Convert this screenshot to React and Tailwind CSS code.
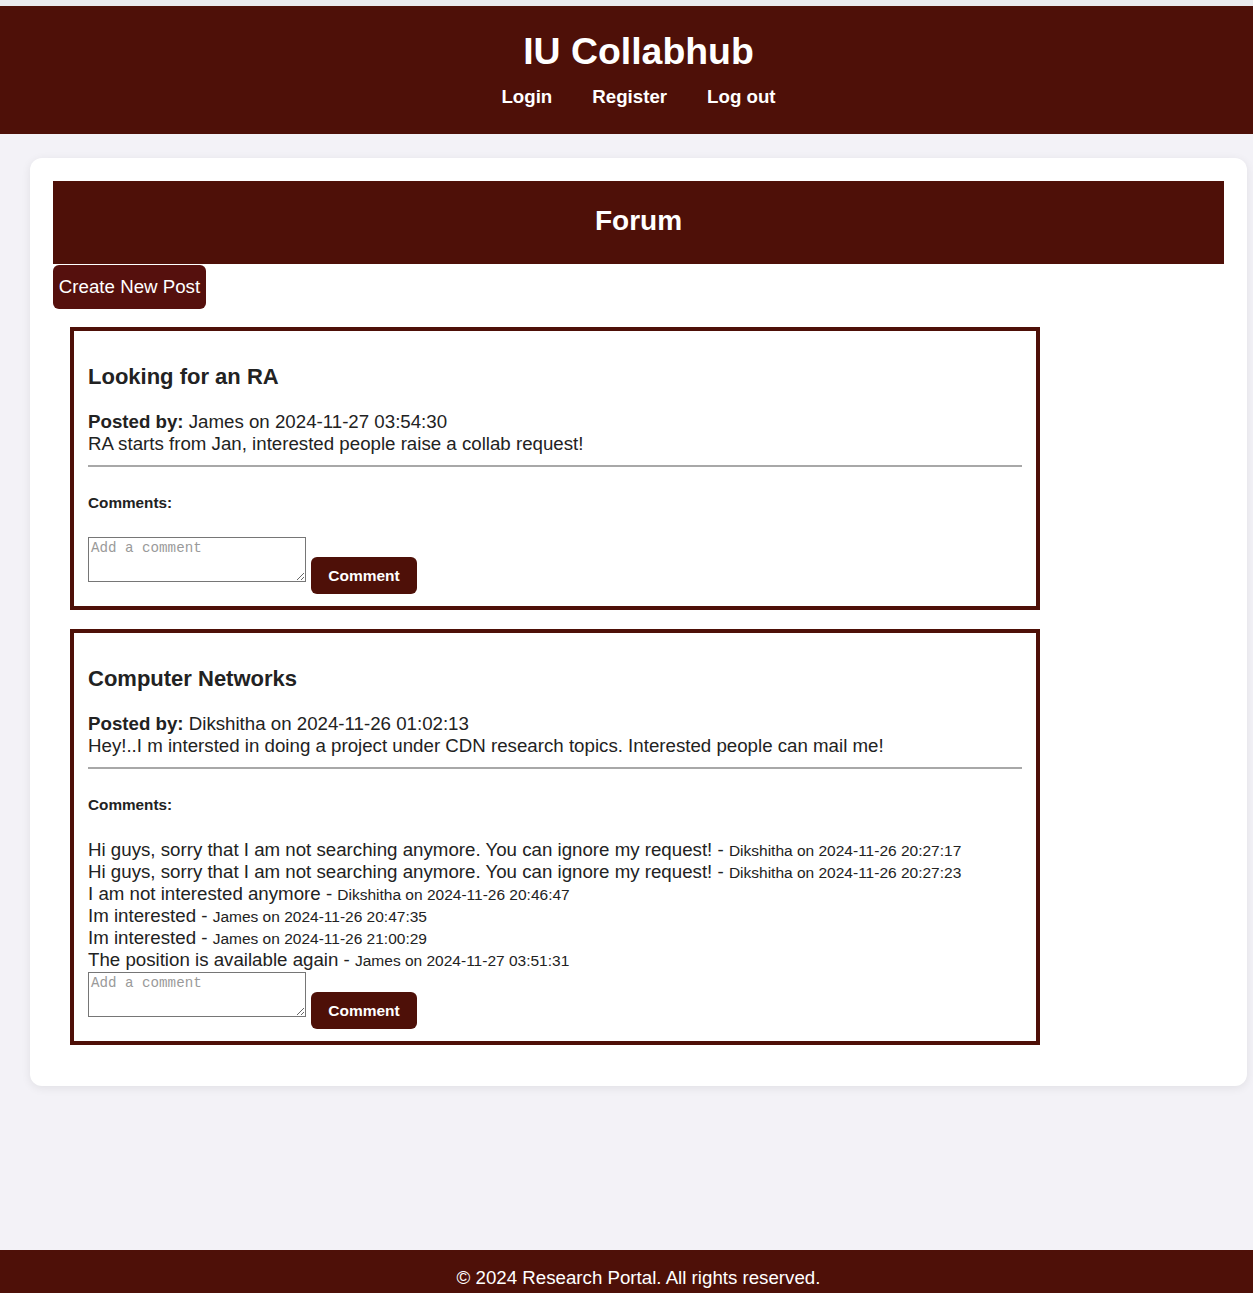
import React from "react";

const posts = [
  {
    title: "Looking for an RA",
    author: "James",
    date: "2024-11-27 03:54:30",
    body: "RA starts from Jan, interested people raise a collab request!",
    comments: [],
  },
  {
    title: "Computer Networks",
    author: "Dikshitha",
    date: "2024-11-26 01:02:13",
    body: "Hey!..I m intersted in doing a project under CDN research topics. Interested people can mail me!",
    comments: [
      ["Hi guys, sorry that I am not searching anymore. You can ignore my request!", "Dikshitha", "2024-11-26 20:27:17"],
      ["Hi guys, sorry that I am not searching anymore. You can ignore my request!", "Dikshitha", "2024-11-26 20:27:23"],
      ["I am not interested anymore", "Dikshitha", "2024-11-26 20:46:47"],
      ["Im interested", "James", "2024-11-26 20:47:35"],
      ["Im interested", "James", "2024-11-26 21:00:29"],
      ["The position is available again", "James", "2024-11-27 03:51:31"],
    ],
  },
];

function Post({ p }) {
  const empty = p.comments.length === 0;
  return (
    <div className="w-[970px] border-4 border-[#4e1008] bg-white px-[14px] pt-[33px] pb-[12px] text-[#222]">
      <h3 className="text-[22px] font-bold leading-[25px]">{p.title}</h3>
      <p className="mt-[22px] text-[18.7px] leading-[22px]">
        <span className="font-bold">Posted by:</span> {p.author} on {p.date}
      </p>
      <p className="text-[18.7px] leading-[22px]">{p.body}</p>
      <div className="mt-[10px] h-[2px] bg-[#a8a8a8]" />
      <h4 className="mt-[27px] text-[15.3px] font-bold leading-[18px]">Comments:</h4>
      <div className="mt-[25px]">
        {p.comments.map((c, i) => (
          <div key={i} className="h-[22px] text-[18.7px] leading-[22px]">
            {c[0]} - <span className="text-[15.5px] leading-[22px]">{c[1]} on {c[2]}</span>
          </div>
        ))}
      </div>
      <div className={empty ? "mt-[2px] flex items-start gap-[5px]" : "mt-px flex items-start gap-[5px]"}>
        <textarea
          placeholder="Add a comment"
          className="h-[45px] w-[218px] border border-[#767676] bg-white p-[2px] font-['Liberation_Mono',monospace] text-[14.2px] leading-[17px] text-[#222] placeholder:text-[#9a9a9a]"
        />
        <button className="mt-[20px] h-[37px] w-[106px] rounded-[6px] bg-[#4e1008] text-[15.5px] font-bold text-white">
          Comment
        </button>
      </div>
    </div>
  );
}

export default function App() {
  return (
    <div className="w-full overflow-hidden font-['Liberation_Sans',Arial,sans-serif]">
      <div className="flex min-h-screen w-[1277px] flex-col bg-[#f3f2f7]">
        <div className="h-[6px] bg-[#eaebee]" />
        <header className="flex flex-col items-center bg-[#4e1008] pt-[24px] pb-[26px] text-white">
          <h1 className="text-[37.4px] font-bold leading-[43px]">IU Collabhub</h1>
          <nav className="mt-[13px] flex gap-[40px] text-[18.7px] font-bold leading-[22px]">
            <a>Login</a>
            <a>Register</a>
            <a>Log out</a>
          </nav>
        </header>
        <main className="flex-1 px-[30px] pt-[24px]">
          <div className="rounded-[12px] bg-white px-[23px] pt-[23px] pb-[41px] shadow-[0_2px_10px_rgba(0,0,0,0.08)]">
            <div className="flex h-[83px] items-center justify-center bg-[#4e1008] pb-[4px]">
              <h2 className="text-[28px] font-bold text-white">Forum</h2>
            </div>
            <button className="mt-px h-[44px] w-[153px] rounded-[6px] bg-[#55100d] text-[18.7px] text-white">
              Create New Post
            </button>
            <div className="mt-[18px] ml-[17px] flex flex-col gap-[19px]">
              {posts.map((p, i) => (
                <Post key={i} p={p} />
              ))}
            </div>
          </div>
        </main>
        <footer className="h-[43px] bg-[#4e1008] pt-[17px] text-center text-[18.7px] leading-[22px] text-white">
          © 2024 Research Portal. All rights reserved.
        </footer>
      </div>
    </div>
  );
}
